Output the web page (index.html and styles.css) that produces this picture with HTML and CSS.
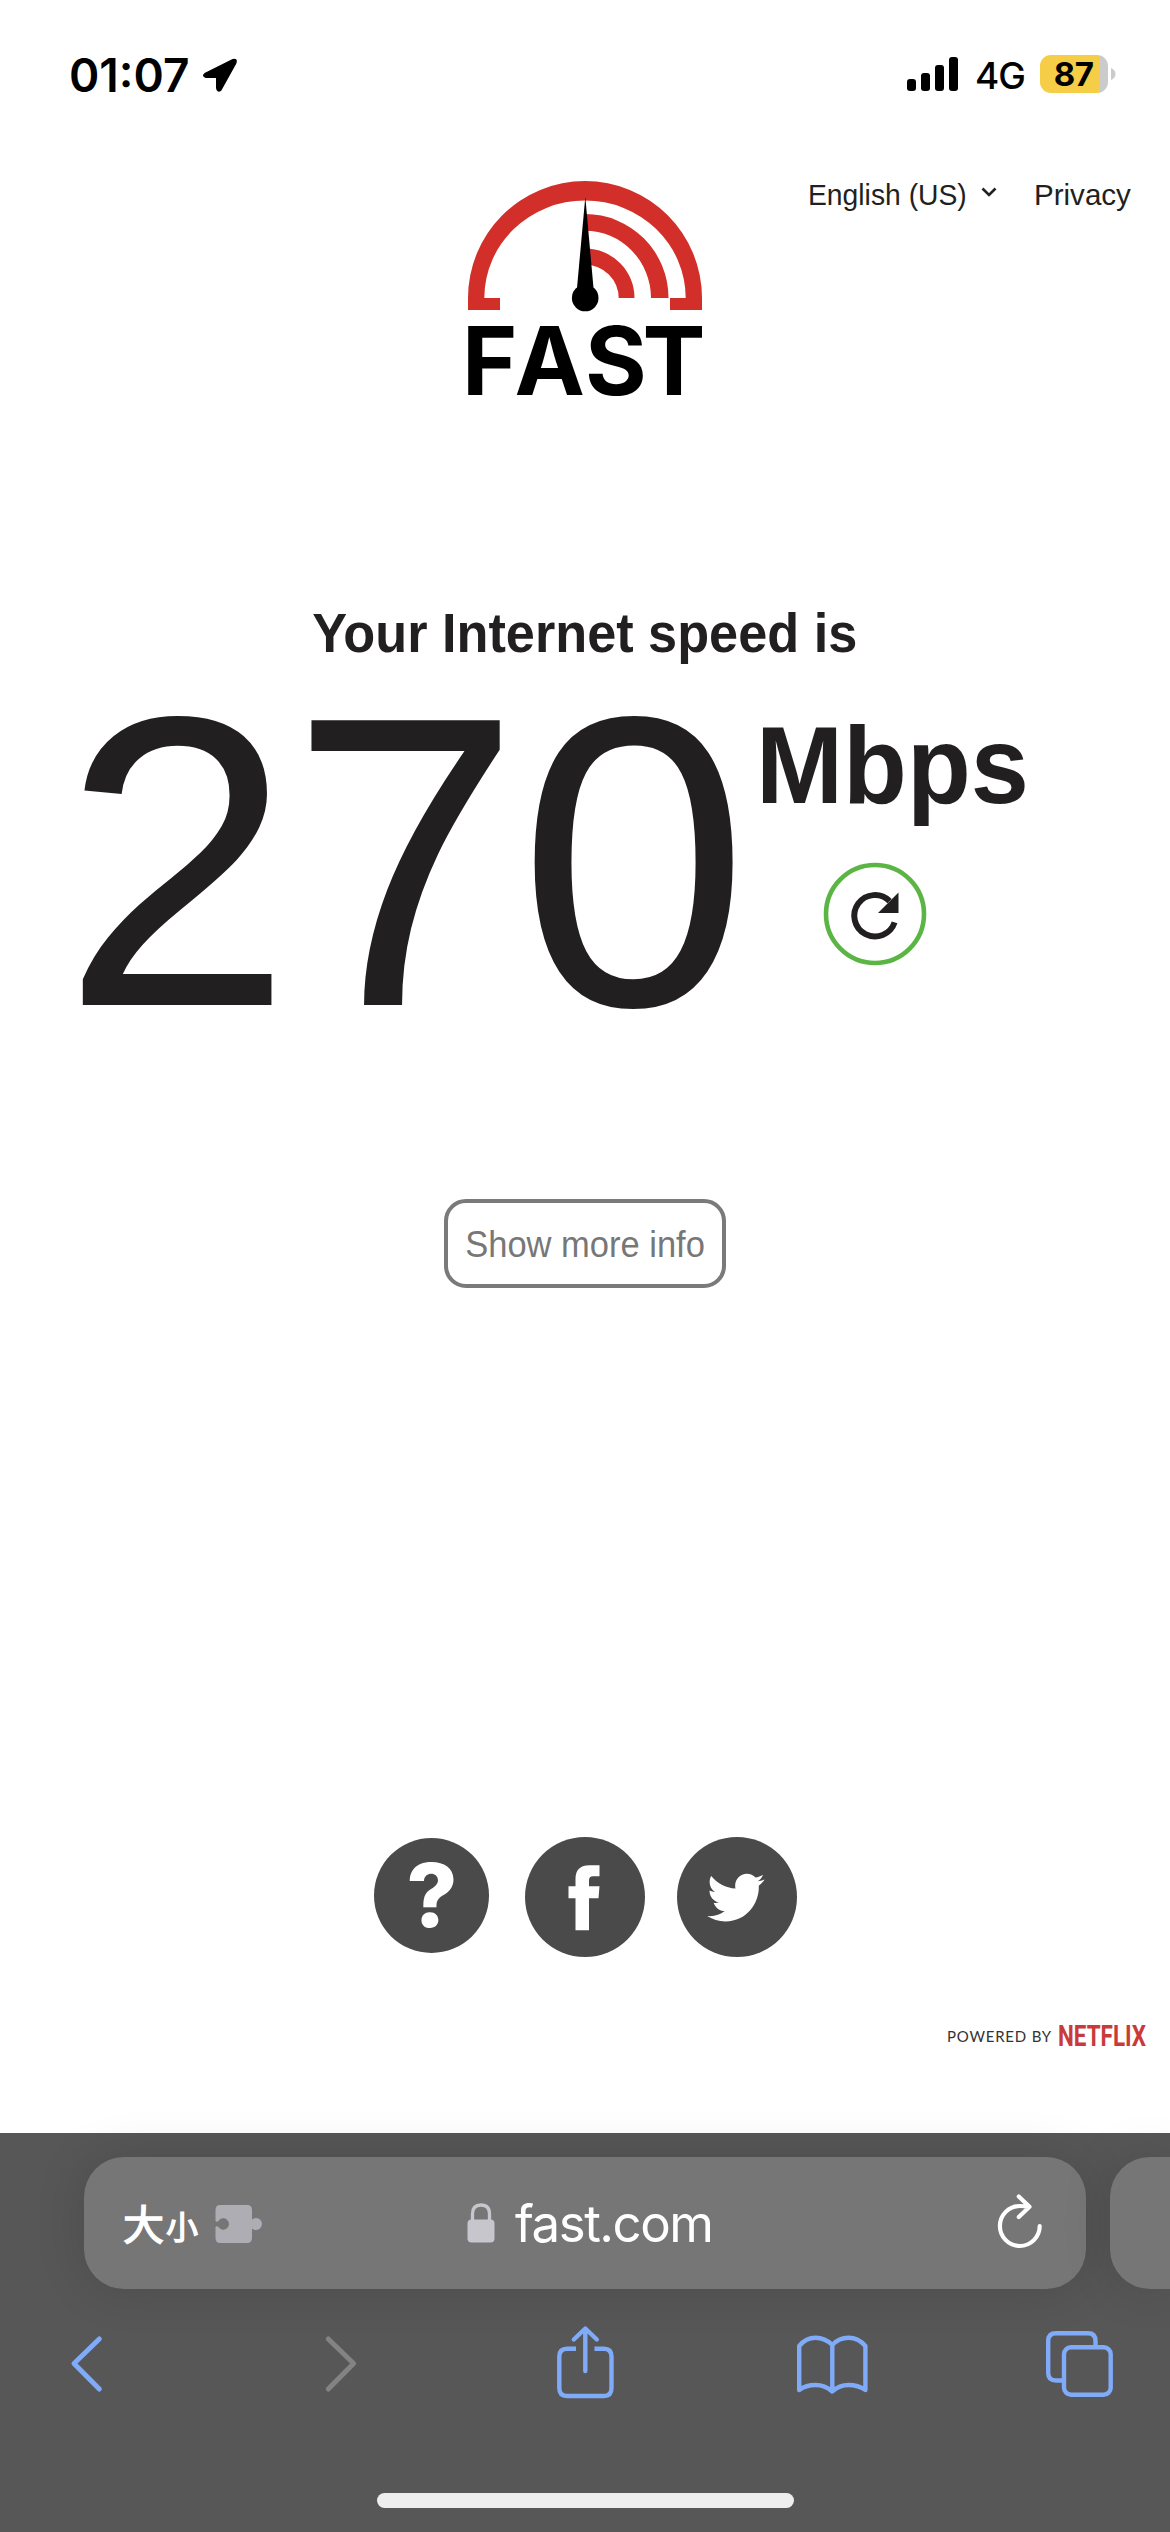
FILE: index.html
```html
<!DOCTYPE html>
<html lang="en">
<head>
<meta charset="utf-8">
<title>Internet Speed Test</title>
<link rel="stylesheet" href="styles.css">
</head>
<body>
<div class="status">
  <span class="time">01:07</span>
  <svg class="location" width="38" height="38" viewBox="0 0 38 38"><path d="M4 18 32 4Q36 3 34.500 7L19.500 34Q16.500 36 16 32V21H5Q1.500 20 4 18Z" stroke="#000" stroke-width="2" stroke-linejoin="round"/></svg>
  <div class="status-right">
    <svg width="52" height="34" viewBox="0 0 52 34"><rect y="22" width="9" height="12" rx="3"/><rect x="14" y="16" width="9" height="18" rx="3"/><rect x="28" y="8" width="9" height="26" rx="3"/><rect x="42" width="9" height="34" rx="3"/></svg>
    <span class="network">4G</span>
    <div class="battery"><span>87</span></div>
    <svg class="nub" width="5" height="12" viewBox="0 0 5 12"><path d="M0 0Q4.500 2 4.500 6T0 12Z" fill="#cbcbcb"/></svg>
  </div>
</div>
<header class="header">
  <svg class="logo" width="254" height="250" viewBox="458 181 254 250">
    <g fill="#d32f2a">
      <path d="M468 310V298A117 117 0 0 1 702 298V310H670V298H685.700A100.700 97.500 0 0 0 484.300 298H500V310Z"/>
      <path d="M585 214A83.500 84 0 0 1 668.500 298H651A66 67.500 0 0 0 585 230.700Z"/>
      <path d="M585 248.500A49.500 49.500 0 0 1 634.500 298H618.700A33.700 33.400 0 0 0 585 264.600Z"/>
    </g>
    <path d="M585.300 197 577 288H593.500Z"/><circle cx="585.200" cy="298" r="13.300"/>
    <text class="wordmark" y="394.500" x="462 514.500 585 642.500">FAST</text>
  </svg>
  <nav class="links">
    <a class="lang"><span>English (US)</span></a>
    <svg width="16" height="10" viewBox="0 0 16 10"><path d="M1.500 1.500 8 8 14.500 1.500" fill="none" stroke="#222" stroke-width="2.600"/></svg>
    <a class="privacy"><span>Privacy</span></a>
  </nav>
</header>
<main class="main">
  <h1 class="title"><span>Your Internet speed is</span></h1>
  <div class="speed">
    <div class="value">270</div>
    <div class="side">
      <div class="unit">Mbps</div>
      <svg class="again" width="104" height="104" viewBox="-52 -52 104 104">
        <circle r="49" fill="none" stroke="#5bb545" stroke-width="4.600"/>
        <path d="M14.600 -12.900A20.700 20.700 0 1 0 19.600 8.400" fill="none" stroke="#221f20" stroke-width="6"/>
        <path d="M23.500 -21.500V-1H3Z" fill="#221f20"/>
      </svg>
    </div>
  </div>
  <button class="more"><span>Show more info</span></button>
</main>
<footer class="footer">
  <div class="social">
    <a class="help">?</a>
    <a class="round"><svg width="120" height="120" viewBox="0 0 120 120"><path d="M50.500 93.300V61.300H43.500V49.300H50.500V42Q50.500 28.300 64.500 28.300H74.500V39.300H68Q64 39.300 64 43.300V49.300H74.500L73.500 61.300H64V93.300Z" fill="#fff"/></svg></a>
    <a class="round"><svg width="120" height="120" viewBox="0 0 120 120"><path transform="translate(30.300 31.300) scale(2.390 2.440)" d="M23.954 4.569c-.885.389-1.830.654-2.825.775 1.014-.611 1.794-1.574 2.163-2.723-.951.555-2.005.959-3.127 1.184-.896-.959-2.173-1.559-3.591-1.559-2.717 0-4.920 2.203-4.920 4.917 0 .390.045.765.127 1.124C7.691 8.094 4.066 6.130 1.640 3.161c-.427.722-.666 1.561-.666 2.475 0 1.710.870 3.213 2.188 4.096-.807-.026-1.566-.248-2.228-.616v.061c0 2.385 1.693 4.374 3.946 4.827-.413.111-.849.171-1.296.171-.314 0-.615-.030-.916-.086.631 1.953 2.445 3.377 4.604 3.417-1.680 1.319-3.809 2.105-6.102 2.105-.390 0-.779-.023-1.170-.067 2.189 1.394 4.768 2.209 7.557 2.209 9.054 0 13.999-7.496 13.999-13.986 0-.209 0-.420-.015-.630.961-.689 1.800-1.560 2.460-2.548z" fill="#fff"/></svg></a>
  </div>
  <div class="powered"><span>POWERED BY</span>
    <svg width="96" height="40" viewBox="0 0 96 40"><text class="netflix" x="0" y="30" textLength="88" lengthAdjust="spacingAndGlyphs">NETFLIX</text></svg>
  </div>
</footer>
<div class="browser">
  <div class="tabs">
    <div class="address">
      <span class="size"><b>大</b><i>小</i></span>
      <svg class="puzzle" width="48" height="40" viewBox="0 0 48 40"><path fill="#aeadb3" d="M5 1H32Q37 1 37 6V15.500A6 6 0 1 1 37 24.500V34Q37 39 32 39H5Q.500 39 .500 34V23Q2 21.500 3.500 23A5.700 5.700 0 1 0 3.500 17Q2 18.500.500 17V6Q.500 1 5 1Z"/></svg>
      <svg class="lock" width="28" height="40" viewBox="0 0 28 40"><rect x=".500" y="16.500" width="27" height="23" rx="4" fill="#c7c6cd"/><path d="M5.500 18V11Q5.500 2 14 2T22.500 11V18" fill="none" stroke="#c7c6cd" stroke-width="3.300"/></svg>
      <span class="host">fast.com</span>
      <svg class="reload" width="48" height="56" viewBox="996 2194 48 56" fill="none" stroke="#fff" stroke-width="4.200" stroke-linecap="round" stroke-linejoin="round"><path d="M1029 2206.500Q1024 2206 1019.800 2206A19.900 20 0 1 0 1039.700 2226M1018.800 2196.500 1029.500 2206.800 1018.800 2217"/></svg>
    </div>
    <div class="next-tab"></div>
  </div>
  <div class="toolbar">
    <svg width="34" height="80" viewBox="70 2324 34 80"><path d="M99.300 2339 74 2363.500 99.300 2389" stroke-width="5"/></svg>
    <svg class="disabled" width="34" height="80" viewBox="324 2324 34 80"><path d="M328.300 2339 353.600 2363.500 328.300 2389" stroke-width="5"/></svg>
    <svg width="60" height="80" viewBox="555 2324 60 80"><path d="M576 2348.700H567Q559.300 2348.700 559.300 2356.500V2388Q559.300 2396 567 2396H604Q611.500 2396 611.500 2388V2356.500Q611.500 2348.700 604 2348.700H594.500" stroke-linecap="butt"/><path d="M585.300 2329V2371M573.800 2339.500 585.300 2328.500 596.800 2339.500"/></svg>
    <svg width="72" height="80" viewBox="796 2324 72 80"><path d="M799.200 2390V2346Q806 2337.800 815.500 2337.800T832.300 2345Q839 2337.800 848.600 2337.800T865.400 2346V2390Q858 2385 848.600 2385T832.300 2391.500Q825 2385 815.500 2385T799.200 2390M832.300 2345V2391"/></svg>
    <svg width="68" height="80" viewBox="1045 2324 68 80"><rect x="1064" y="2347.300" width="46.700" height="47.400" rx="7"/><path d="M1064 2380.500H1056Q1048.200 2380.500 1048.200 2373V2341Q1048.200 2333.300 1056 2333.300H1088Q1095.500 2333.300 1095.500 2341V2347" stroke-linecap="butt"/></svg>
  </div>
  <div class="home"></div>
</div>
</body>
</html>
```

FILE: styles.css
```css
* { box-sizing: border-box; }
body { margin: 0; width: 1170px; height: 2532px; overflow: hidden; display: flex; flex-direction: column; background: #fff; color: #221f20; font-family: "Liberation Sans", Arial, sans-serif; }
svg { display: block; flex: none; }

.status { height: 181px; padding: 55px 54px 0 69px; display: flex; align-items: flex-start; font-family: Inter, sans-serif; color: #000; }
.time { width: 132px; padding-top: 1px; font-size: 46px; line-height: 38px; font-weight: 600; letter-spacing: 0; white-space: nowrap; }
.location { margin-top: 1px; }
.status-right { margin-left: auto; display: flex; align-items: flex-start; }
.status-right > svg:first-child { margin-top: 2px; }
.network { width: 65px; margin: 2px 0 0 16px; font-size: 37px; line-height: 38px; font-weight: 500; letter-spacing: -1px; white-space: nowrap; }
.battery { width: 68px; height: 38px; border-radius: 11px; background: linear-gradient(90deg, #f6cd46 59.500px, #cbcbcb 59.500px); display: flex; justify-content: center; padding-right: 1px; }
.battery span { font-size: 33px; line-height: 38px; font-weight: 700; letter-spacing: -0.5px; }
.nub { margin: 13px 0 0 3px; }

.header { height: 416px; display: grid; grid-template-columns: 1fr 254px 1fr; align-items: start; }
.logo { grid-column: 2; }
.wordmark { font-family: Inter, sans-serif; font-weight: 700; font-size: 94.300px; }
.links { display: flex; align-items: flex-start; padding-left: 96px; font-size: 30px; line-height: 34px; }
.links svg { margin-top: 6px; }
.links span, .title span, .more span { display: inline-block; white-space: nowrap; transform-origin: 0 50%; }
.links .lang span { transform: scaleX(.943); }
.links .privacy span { transform: scaleX(.985); }
.links a { margin-top: -3px; }
.lang { width: 173px; }
.privacy { width: 100px; margin-left: 37px; }

.main { height: 1240px; display: flex; flex-direction: column; align-items: center; }
.title { margin: 3px 0 0; height: 68px; font-size: 55px; line-height: 66px; }
.title span { transform: scaleX(.95); transform-origin: 50% 50%; }
.speed { align-self: stretch; display: flex; padding-left: 62px; height: 400px; }
.value { width: 694px; margin-top: -6px; font-size: 414px; line-height: 400px; letter-spacing: -2px; white-space: nowrap; }
.side { padding-top: 37px; display: flex; flex-direction: column; }
.unit { width: 300px; font-size: 110px; line-height: 120px; font-weight: bold; transform: scaleX(.95); transform-origin: 0 0; }
.again { margin: 37px 0 0 67px; }
.more { margin-top: 131px; width: 282px; height: 89px; padding: 3px 0 0; border: 4px solid #7a7a7a; border-radius: 22px; background: #fff; color: #777; font: 36px "Liberation Sans", Arial, sans-serif; }
.more span { margin: 0 -10px; transform-origin: 50% 50%; transform: scaleX(.958); }

.footer { flex: 1; }
.social { display: flex; align-items: flex-start; padding-left: 374px; height: 170px; }
.social a { border-radius: 50%; background: #4a4a4a; }
.help { width: 115px; height: 115px; padding-left: 1px; margin: 1px 36px 0 0; color: #fff; font: 800 88px/115px Inter, sans-serif; text-align: center; }
.round { width: 120px; height: 120px; margin-right: 32px; }
.powered { display: flex; align-items: flex-start; justify-content: flex-end; padding: 9px 16px 0 0; }
.powered span { margin: 8px 6px 0 0; font: 15px/24px Lato, sans-serif; letter-spacing: .800px; color: #333; white-space: nowrap; }
.netflix { font: bold 30px Roboto, sans-serif; fill: #c93b3a; }

.browser { height: 399px; background: #575757; padding-top: 24px; }
.tabs { display: flex; gap: 24px; padding-left: 84px; height: 132px; }
.address, .next-tab { flex: none; height: 132px; border-radius: 40px; background: #767676; box-shadow: 0 0 50px rgba(0, 0, 0, .13); }
.address { width: 1002px; display: flex; align-items: flex-start; padding: 45px 42px 0 39px; color: #fff; }
.next-tab { width: 60px; border-radius: 40px 0 0 40px; }
.size { display: flex; width: 92px; font-family: "Noto Sans CJK SC", sans-serif; line-height: 40px; white-space: nowrap; -webkit-text-stroke: 1.400px #fff; }
.size b { font-size: 41px; font-weight: 400; width: 43px; }
.size i { font-size: 32px; font-style: normal; line-height: 47px; }
.puzzle { margin-top: 2px; }
.lock { margin: 1px 0 0 204px; }
.host { margin-left: 20px; font: 400 51px/60px Inter, sans-serif; letter-spacing: -1.500px; margin-top: -8px; white-space: nowrap; }
.reload { margin: -8px 0 0 auto; }
.toolbar { display: grid; grid-template-columns: 254px 231px 241px 249px auto; align-items: start; padding: 35px 0 0 70px; height: 204px; }
.toolbar svg { fill: none; stroke: #80abf9; stroke-width: 4.400; stroke-linecap: round; stroke-linejoin: round; }
.toolbar .disabled { stroke: #838383; }
.home { width: 417px; height: 15px; margin-left: 377px; border-radius: 8px; background: #eee; }
```
